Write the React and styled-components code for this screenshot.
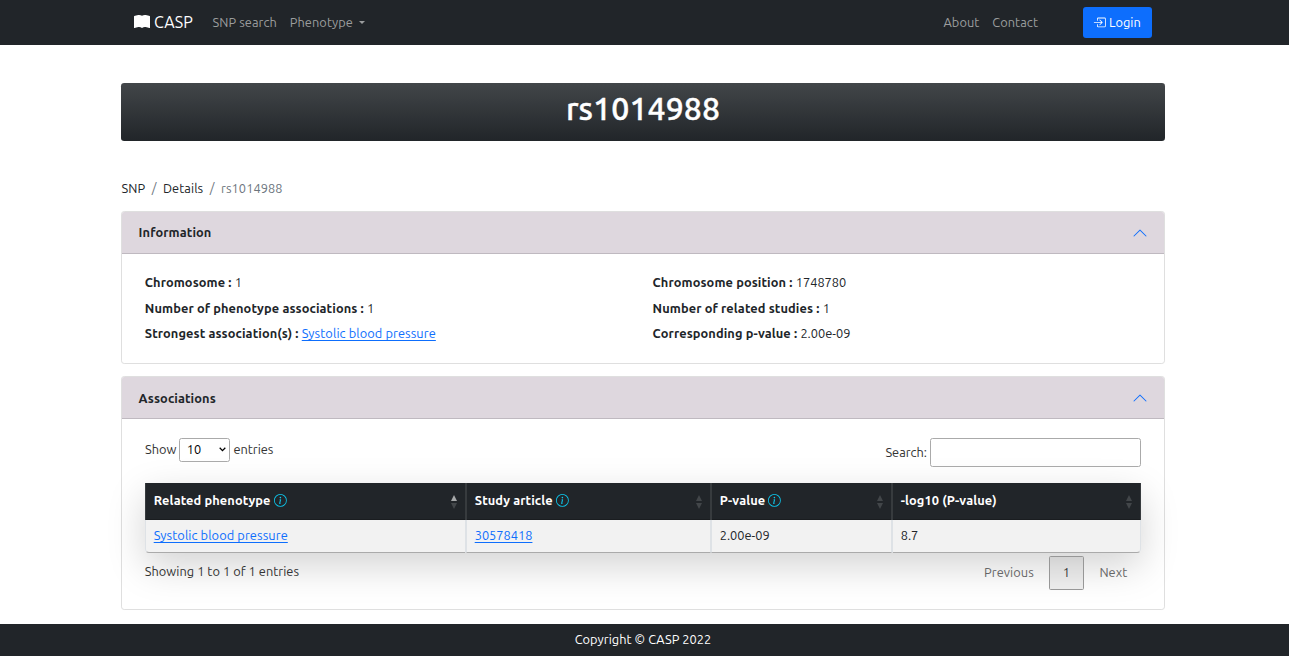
import React from 'react';
import styled, { createGlobalStyle } from 'styled-components';
import { BsBoxArrowInRight, BsInfoCircle, BsBookFill } from 'react-icons/bs';

const GlobalStyle = createGlobalStyle`
  *, *::before, *::after { box-sizing: border-box; }
  body {
    margin: 0;
    background: #fff;
    color: #212529;
    font-family: Ubuntu, "Noto Sans", "Open Sans", sans-serif;
    font-size: 12.8px;
    line-height: 19.2px;
  }
`;

const T = styled.span`white-space: nowrap;`;
const Page = styled.div`height: 656px; display: flex; flex-direction: column; overflow: hidden;`;

const Navbar = styled.nav`
  height: 45px;
  flex: none;
  background: #212529;
  display: flex;
  align-items: center;
  padding: 0 137px 0 134px;
`;
const Brand = styled.a`
  display: flex;
  align-items: center;
  gap: 4px;
  width: 78.4px;
  padding-bottom: 2px;
  color: #fff;
  font-size: 16px;
  line-height: 24px;
`;
const NavLink = styled.a`
  color: #9b9d9e;
  letter-spacing: 0.08px;
  margin-right: ${(p) => p.$gap ?? 12.8}px;
  display: flex;
  align-items: center;
`;
const Caret = styled.i`
  margin-left: 6px;
  border: 3.5px solid transparent;
  border-top-color: currentColor;
  border-bottom: 0;
`;
const Spacer = styled.div`flex: 1;`;
const LoginButton = styled.button`
  width: 69px;
  height: 31px;
  border: 0;
  border-radius: 3px;
  background: #0d6efd;
  color: #fff;
  font: inherit;
  padding: 0 1px 0 0;
  display: flex;
  align-items: center;
  justify-content: center;
  gap: 3px;
`;

const Main = styled.main`flex: 1; width: 1044px; margin-left: 121px; padding-top: 38px;`;
const Banner = styled.h1`
  margin: 0;
  height: 58px;
  border-radius: 3.2px;
  background: linear-gradient(#424649, #212529);
  color: #fff;
  font-size: 32px;
  font-weight: 500;
  -webkit-text-stroke: 0.4px #fff;
  letter-spacing: 0.1px;
  line-height: 51px;
  text-align: center;
`;
const Breadcrumb = styled.div`
  margin-top: 38px;
  height: 32px;
  padding: 0 0 13px 0.4px;
  display: flex;
  gap: 6.5px;
  letter-spacing: 0.08px;
`;
const Muted = styled.span`color: #6c757d; white-space: nowrap;`;

const Card = styled.section`
  height: ${(p) => p.$h}px;
  margin-bottom: 12px;
  border: 1px solid #dfdfdf;
  border-radius: 3.2px;
`;
const CardHeader = styled.header`
  height: 42px;
  padding: 0 16px 0 16.6px;
  background: #ded7de;
  border-bottom: 1px solid #bfb9c0;
  border-radius: 2.2px 2.2px 0 0;
  display: flex;
  justify-content: space-between;
  align-items: center;
  font-weight: 700;
  letter-spacing: 0.1px;
`;
const CardTitle = styled(T)`padding-top: ${(p) => p.$drop || 0}px;`;
const Facts = styled.div`
  padding: 16px 22.8px;
  display: grid;
  grid-template-columns: 507.8px 1fr;
  grid-auto-rows: 25.5px;
`;
const Fact = styled.div`line-height: 25.5px; white-space: nowrap;`;
const Label = styled.b`margin-right: 3.2px; letter-spacing: 0.1px;`;
const Link = styled.a`
  color: #0d6efd;
  text-decoration: underline;
  text-underline-offset: 2px;
  white-space: nowrap;
  letter-spacing: ${(p) => (p.$numeric ? 0 : 0.09)}px;
`;
const CardBody = styled.div`padding: 19px 23px 0;`;
const Controls = styled.div`
  height: 45px;
  display: flex;
  justify-content: space-between;
  align-items: flex-start;
  color: #333;
`;
const Field = styled.label`
  display: flex;
  align-items: center;
  gap: 3px;
`;
const FieldText = styled(T)`
  margin-bottom: ${(p) => p.$raise || 0}px;
`;
const Select = styled.div`
  width: 51px;
  height: 24px;
  padding: 0 3px 1px 6.4px;
  border: 1px solid #aaa;
  border-radius: 2.5px;
  color: #000;
  display: flex;
  align-items: center;
  justify-content: space-between;
`;
const SearchInput = styled.input`
  width: 211px;
  height: 29px;
  border: 1px solid #aaa;
  border-radius: 2.5px;
  background: transparent;
`;
const Table = styled.div`
  display: grid;
  grid-template-columns: 321px 245px 181px 249px;
  grid-template-rows: 37px 33px;
  border-radius: 0 0 4px 4px;
  box-shadow: 0 12.8px 38.4px rgba(0, 0, 0, 0.175);
`;
const HeadCell = styled.div`
  background: #212529;
  color: #fff;
  border: solid #373b3e;
  border-width: 0 1px;
  box-shadow: inset 0 -1px #1a1d20;
  padding: 0 8px 2px 7.8px;
  font-weight: 700;
  letter-spacing: 0.1px;
  display: flex;
  align-items: center;
  gap: 3.2px;
`;
const Cell = styled.div`
  background: #f2f2f2;
  border: 1px solid #dee2e6;
  border-top: 0;
  border-bottom-color: #aaa;
  padding: 6px 7.7px;
  &:nth-child(5) { border-bottom-left-radius: 4px; }
  &:last-child { border-bottom-right-radius: 4px; }
`;
const Sort = styled.span`display: flex; flex-direction: column; gap: 2px; margin: 3px 0 0 auto;`;
const Triangle = styled.i`
  border: 3px solid transparent;
  ${(p) => (p.$up
    ? `border-top: 0; border-bottom: 6px solid ${p.$active ? '#a6a8a9' : '#424649'};`
    : 'border-bottom: 0; border-top: 6px solid #424649;')}
`;
const TableFooter = styled.div`
  padding-top: 3px;
  display: flex;
  align-items: flex-start;
  color: #333;
`;
const Summary = styled(T)`margin: 6px 0 0 -0.3px; letter-spacing: 0.04px;`;
const Pager = styled.div`display: flex; align-items: center; padding-right: 13.6px;`;
const PageButton = styled.span`color: #666; white-space: nowrap; letter-spacing: 0.08px;`;
const CurrentPage = styled.span`
  width: 35px;
  height: 34px;
  margin: 0 15px 0 15.5px;
  padding-right: 1px;
  border: 1px solid #979797;
  border-radius: 1.6px;
  background: rgba(0, 0, 0, 0.06);
  line-height: 31px;
  text-align: center;
`;
const Footer = styled.footer`
  height: 32px;
  flex: none;
  background: #212529;
  color: #fff;
  line-height: 31px;
  text-align: center;
  padding-right: 3px;
  letter-spacing: 0.04px;
`;

const Chevron = () => (
  <svg width="16" height="16" viewBox="0 0 16 16" fill="#0d6efd">
    <path d="M1.646 11.354a.5.5 0 0 0 .708 0L8 5.707l5.646 5.647a.5.5 0 0 0 .708-.708l-6-6a.5.5 0 0 0-.708 0l-6 6a.5.5 0 0 0 0 .708z" />
  </svg>
);

const columns = [
  { title: 'Related phenotype', info: true, asc: true },
  { title: 'Study article', info: true },
  { title: 'P-value', info: true },
  { title: '-log10 (P-value)' },
];

export default function App() {
  return (
    <Page>
      <GlobalStyle />
      <Navbar>
        <Brand><BsBookFill size={16} /><T>CASP</T></Brand>
        <NavLink><T>SNP search</T></NavLink>
        <NavLink><T>Phenotype</T><Caret /></NavLink>
        <Spacer />
        <NavLink><T>About</T></NavLink>
        <NavLink $gap={45}><T>Contact</T></NavLink>
        <LoginButton><BsBoxArrowInRight size={12.8} /><T>Login</T></LoginButton>
      </Navbar>
      <Main>
        <Banner><T>rs1014988</T></Banner>
        <Breadcrumb>
          <T>SNP</T><Muted>/</Muted><T>Details</T><Muted>/</Muted><Muted>rs1014988</Muted>
        </Breadcrumb>
        <Card $h={153}>
          <CardHeader><CardTitle>Information</CardTitle><Chevron /></CardHeader>
          <Facts>
            <Fact><Label>Chromosome :</Label><T>1</T></Fact>
            <Fact><Label>Chromosome position :</Label><T>1748780</T></Fact>
            <Fact><Label>Number of phenotype associations :</Label><T>1</T></Fact>
            <Fact><Label>Number of related studies :</Label><T>1</T></Fact>
            <Fact><Label>Strongest association(s) :</Label><Link>Systolic blood pressure</Link></Fact>
            <Fact><Label>Corresponding p-value :</Label><T>2.00e-09</T></Fact>
          </Facts>
        </Card>
        <Card $h={234}>
          <CardHeader><CardTitle $drop={2}>Associations</CardTitle><Chevron /></CardHeader>
          <CardBody>
            <Controls>
              <Field>
                <FieldText $raise={1}>Show</FieldText>
                <Select>
                  <T>10</T>
                  <svg width="7" height="5" viewBox="0 0 7 5" fill="none" stroke="#000" strokeWidth="1.3"><path d="M.7 .8 3.5 3.6 6.3 .8" /></svg>
                </Select>
                <FieldText $raise={1}>entries</FieldText>
              </Field>
              <Field><FieldText>Search:</FieldText><SearchInput /></Field>
            </Controls>
            <Table>
              {columns.map((c) => (
                <HeadCell key={c.title}>
                  <T>{c.title}</T>
                  {c.info && <BsInfoCircle size={12.8} color="#0dcaf0" />}
                  <Sort><Triangle $up $active={c.asc} /><Triangle /></Sort>
                </HeadCell>
              ))}
              <Cell><Link>Systolic blood pressure</Link></Cell>
              <Cell><Link $numeric>30578418</Link></Cell>
              <Cell><T>2.00e-09</T></Cell>
              <Cell><T>8.7</T></Cell>
            </Table>
            <TableFooter>
              <Summary>Showing 1 to 1 of 1 entries</Summary>
              <Spacer />
              <Pager>
                <PageButton>Previous</PageButton>
                <CurrentPage>1</CurrentPage>
                <PageButton>Next</PageButton>
              </Pager>
            </TableFooter>
          </CardBody>
        </Card>
      </Main>
      <Footer><T>Copyright © CASP 2022</T></Footer>
    </Page>
  );
}
